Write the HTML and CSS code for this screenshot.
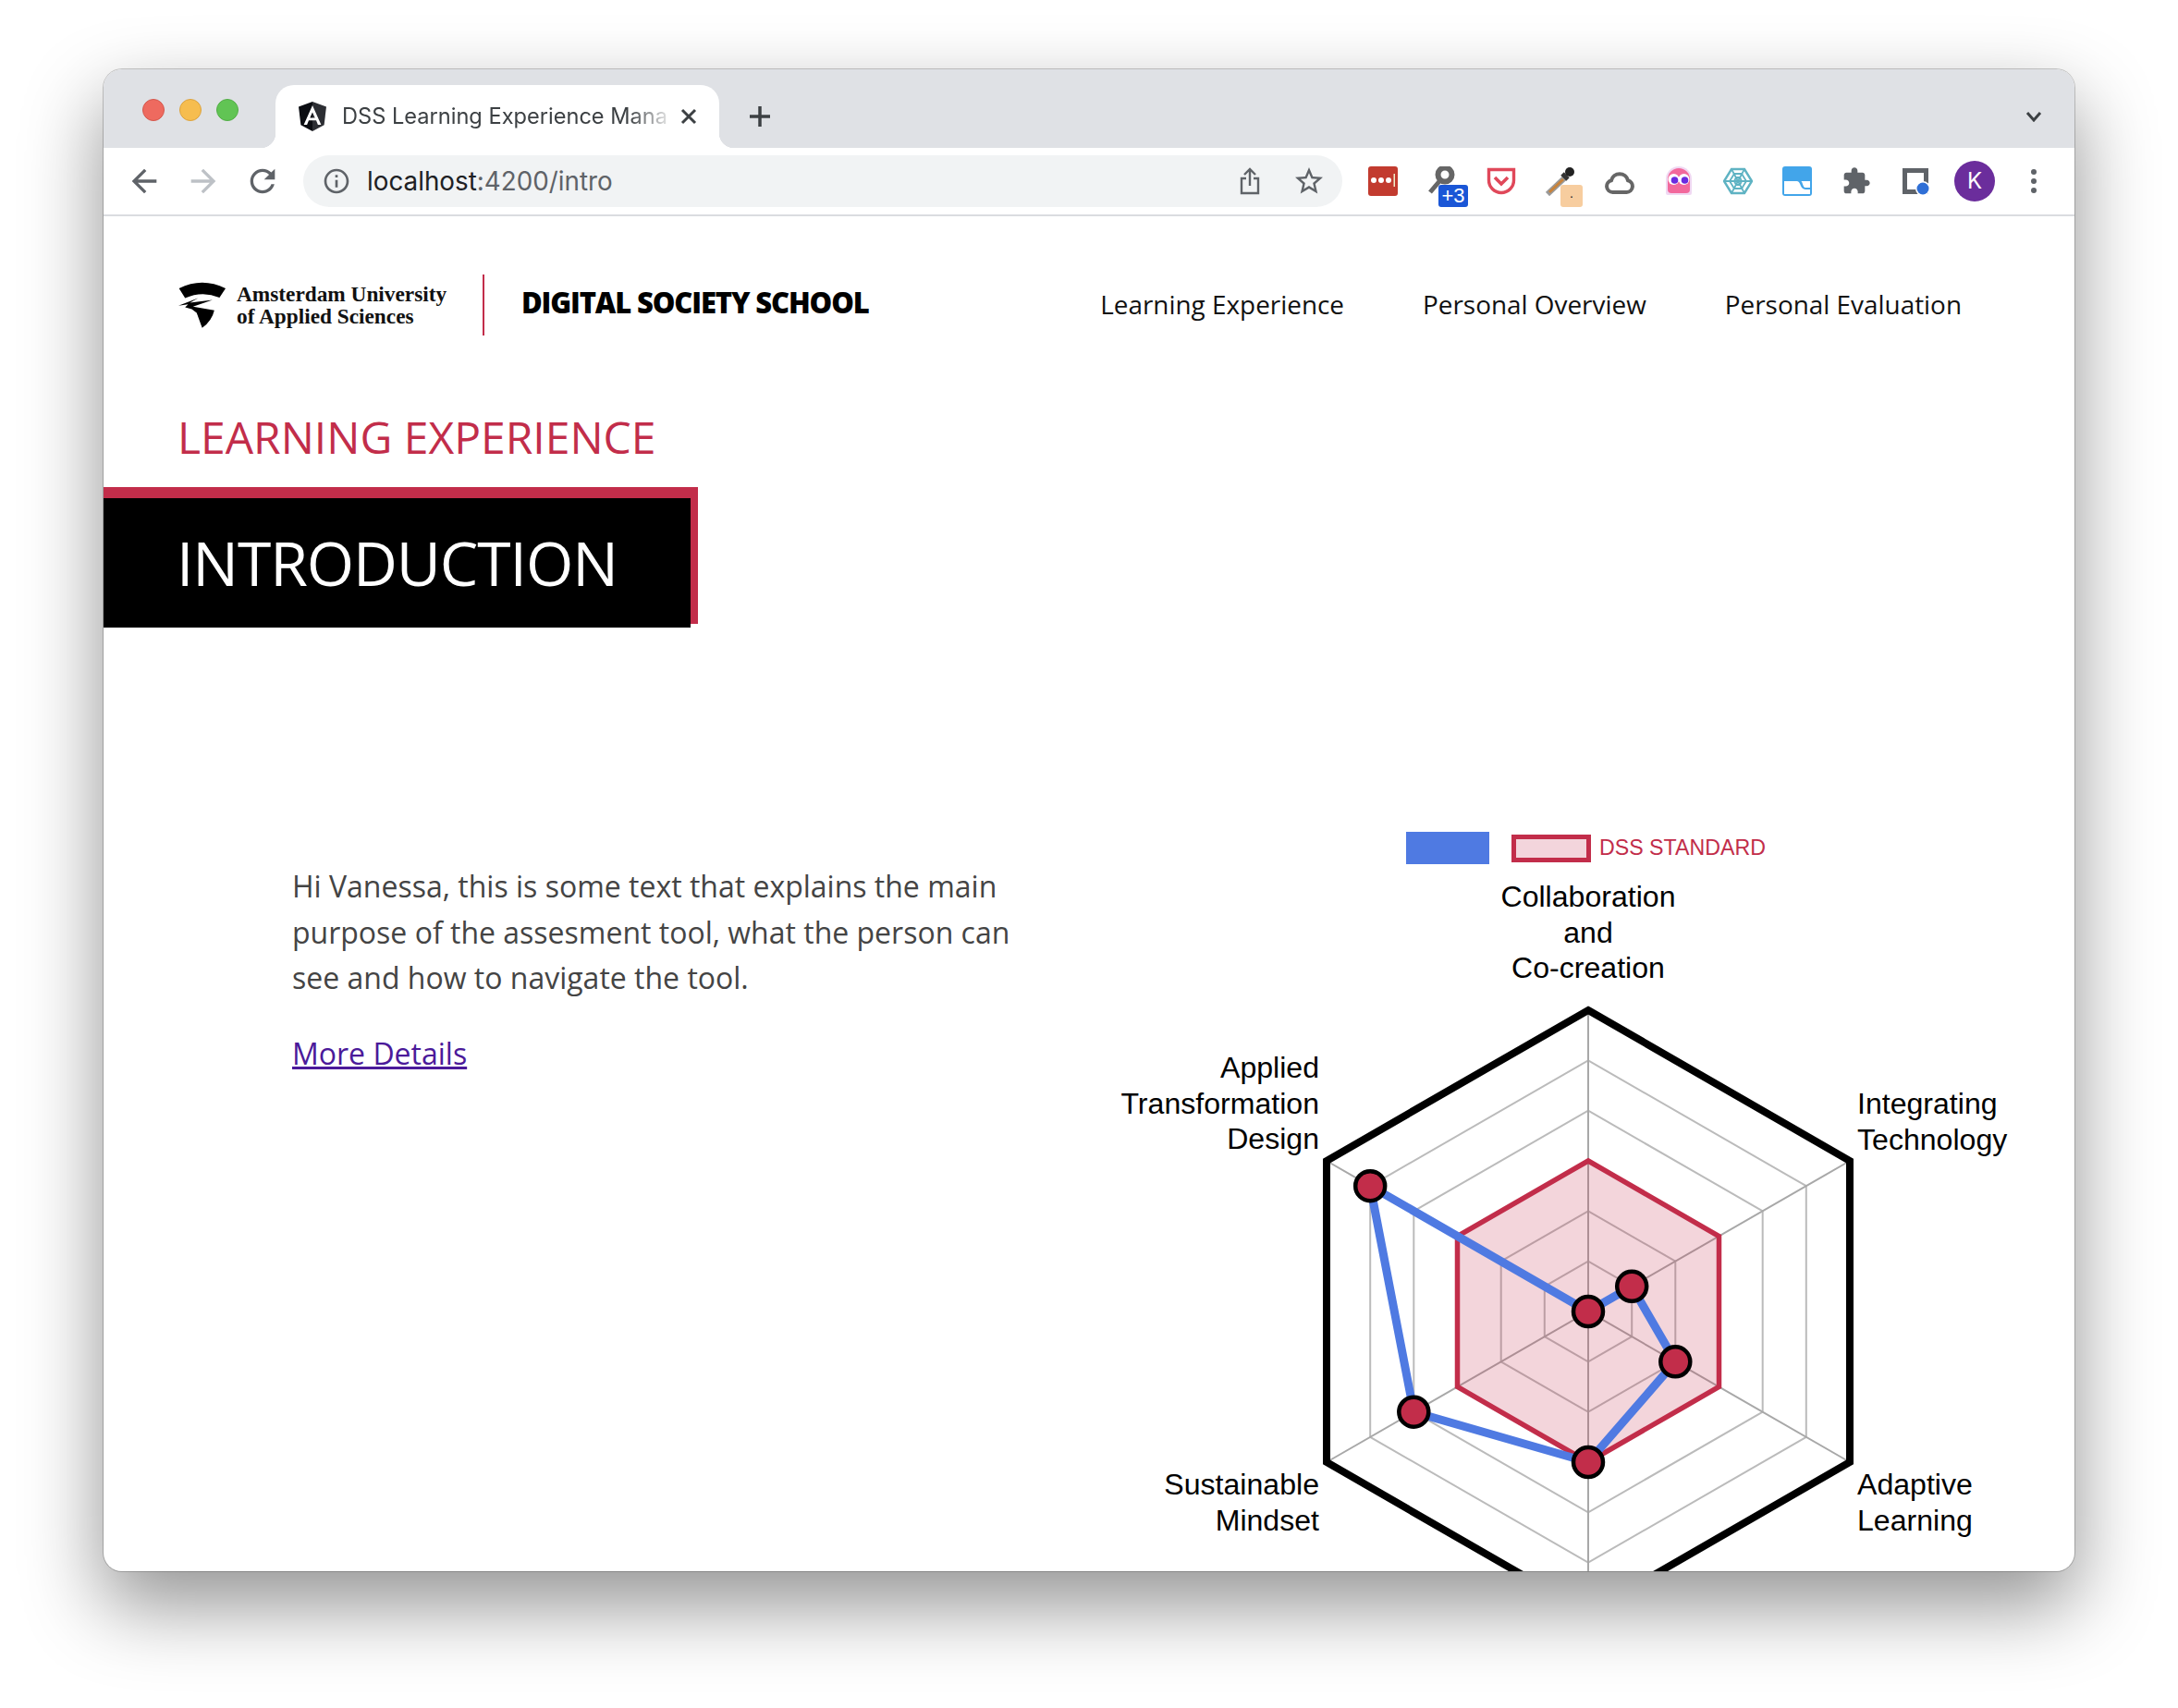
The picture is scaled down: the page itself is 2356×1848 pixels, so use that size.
FILE: index.html
```html
<!DOCTYPE html>
<html lang="en">
<head>
    <meta charset="UTF-8">
    <meta name="viewport" content="width=device-width, initial-scale=1.0">
    <title>DSS Learning Experience Management</title>
    <link rel="stylesheet" href="styles.css">
</head>
<body>

<div class="window">

    <!-- Browser tabs -->
    <div class="tabstrip">
        <div class="lights">
            <span class="light red"></span>
            <span class="light yellow"></span>
            <span class="light green"></span>
        </div>
        <div class="tab">
            <svg class="favicon" viewBox="0 0 32 32">
                <path fill="#0b0d12" d="M16 0 1 5.500l2.400 19.700L16 32z"/>
                <path fill="#2c2e33" d="M16 0l15 5.500-2.400 19.700L16 32z"/>
                <path fill="#fff" d="M16 4 6.600 25h3.500l1.900-4.700h8l1.900 4.700h3.500zm0 7.600 2.700 6h-5.400z"/>
            </svg>
            <span class="tab-title">DSS Learning Experience Mana</span>
            <svg class="tab-close" viewBox="0 0 24 24"><path d="M5 5l14 14M19 5 5 19"/></svg>
        </div>
        <svg class="new-tab" viewBox="0 0 24 24"><path d="M12 1v22M1 12h22"/></svg>
        <svg class="tab-menu" viewBox="0 0 24 24"><path d="M5 8l7 8 7-8"/></svg>
    </div>

    <!-- Browser toolbar -->
    <div class="toolbar">
        <div class="cell">
            <svg class="icon-40" viewBox="0 0 24 24"><path fill="#5f6368" d="M20 11H7.830l5.590-5.590L12 4l-8 8 8 8 1.410-1.410L7.830 13H20v-2z"/></svg>
        </div>
        <div class="cell">
            <svg class="icon-40" viewBox="0 0 24 24"><path fill="#bdc1c6" d="M4 11h12.170l-5.590-5.590L12 4l8 8-8 8-1.410-1.410L16.170 13H4v-2z"/></svg>
        </div>
        <div class="cell">
            <svg class="icon-40" viewBox="0 0 24 24"><path fill="#5f6368" d="M17.650 6.350C16.200 4.900 14.210 4 12 4c-4.420 0-7.990 3.580-7.990 8s3.570 8 7.990 8c3.730 0 6.840-2.550 7.730-6h-2.080c-.82 2.330-3.040 4-5.650 4-3.310 0-6-2.690-6-6s2.690-6 6-6c1.660 0 3.140.69 4.220 1.780L13 11h7V4l-2.350 2.350z"/></svg>
        </div>

        <div class="address">
            <svg class="icon-32" viewBox="0 0 24 24"><path fill="#5f6368" d="M11 7h2v2h-2zm0 4h2v6h-2zm1-9C6.480 2 2 6.480 2 12s4.480 10 10 10 10-4.480 10-10S17.520 2 12 2zm0 18c-4.410 0-8-3.590-8-8s3.590-8 8-8 8 3.590 8 8-3.590 8-8 8z"/></svg>
            <span class="url">localhost<span class="url-path">:4200/intro</span></span>
            <svg class="address-share" viewBox="0 0 24 32"><path d="M12 21V3M6 9l6-6 6 6M8 13H3v16h18V13h-5"/></svg>
            <svg class="address-star" viewBox="0 0 24 24"><path fill="#5f6368" d="M22 9.240l-7.190-.62L12 2 9.190 8.630 2 9.240l5.460 4.730L5.820 21 12 17.270 18.180 21l-1.630-7.030L22 9.240zM12 15.400l-3.760 2.270 1-4.280-3.320-2.880 4.380-.38L12 6.100l1.710 4.040 4.380.38-3.320 2.880 1 4.280L12 15.400z"/></svg>
        </div>

        <div class="extensions">
            <div class="cell">
                <svg class="icon-32" viewBox="0 0 32 32">
                    <rect width="32" height="32" rx="3" fill="#c23b2f"/>
                    <circle cx="6" cy="15" r="3" fill="#fff"/><circle cx="14" cy="15" r="3" fill="#fff"/><circle cx="22" cy="15" r="3" fill="#fff"/>
                    <rect x="27.500" y="8" width="1.500" height="14" fill="#eec"/>
                </svg>
            </div>
            <div class="cell">
                <svg class="icon-32" viewBox="0 0 32 32"><circle cx="19" cy="9" r="7.500" fill="none" stroke="#666" stroke-width="6"/><path d="M14 15 3 28" stroke="#666" stroke-width="5"/></svg>
                <span class="badge badge-blue">+3</span>
            </div>
            <div class="cell">
                <svg class="icon-32" viewBox="0 0 32 32"><path fill="none" stroke="#e0485a" stroke-width="3.400" d="M2.500 3.500h27V15a13.500 13.500 0 0 1-27 0z"/><path fill="none" stroke="#e0485a" stroke-width="3.600" d="M9 12l7 7 7-7"/></svg>
            </div>
            <div class="cell">
                <svg class="icon-32" viewBox="0 0 32 32">
                    <path d="M20 13 2 30" stroke="#9a9a9a" stroke-width="6"/>
                    <path d="M19 14 4 28" stroke="#c9833a" stroke-width="3"/>
                    <path d="M18 8l6 6" stroke="#333" stroke-width="5"/>
                    <circle cx="26" cy="6" r="5" fill="#222"/>
                </svg>
                <span class="badge badge-peach">.</span>
            </div>
            <div class="cell">
                <svg class="icon-32" viewBox="0 0 32 32"><path fill="none" stroke="#666" stroke-width="4" d="M8.500 28a6.500 6.500 0 0 1-1.500-12.800 9.300 9.300 0 0 1 18 0A6.500 6.500 0 0 1 23.500 28z"/></svg>
            </div>
            <div class="cell">
                <svg class="icon-32" viewBox="0 0 32 32">
                    <path fill="#f0d8f2" d="M2 14a14 14 0 0 1 28 0v15a2 2 0 0 1-2 2H4a2 2 0 0 1-2-2z"/>
                    <path fill="#f2689c" d="M4 14a12 12 0 0 1 24 0v11a4 4 0 0 1-4 4H8a4 4 0 0 1-4-4z"/>
                    <circle cx="10.500" cy="14" r="6" fill="#fff"/><circle cx="21.500" cy="14" r="6" fill="#fff"/>
                    <circle cx="11.500" cy="15" r="3.800" fill="#6a2be0"/><circle cx="22.500" cy="15" r="3.800" fill="#6a2be0"/>
                </svg>
            </div>
            <div class="cell">
                <svg class="icon-32" viewBox="0 0 32 32" fill="none" stroke="#5fb3c3" stroke-width="1.800">
                    <path stroke-width="2.400" d="M9 3h14l8 13-8 13H9L1 16z"/>
                    <path d="M12 8h8l5 8-5 8h-8l-5-8z"/>
                    <path d="M14 12h4l2 4-2 4h-4l-2-4z"/>
                    <path d="M9 3l14 26M23 3 9 29M1 16h30"/>
                </svg>
            </div>
            <div class="cell">
                <svg class="icon-32" viewBox="0 0 32 32">
                    <rect width="32" height="32" rx="3" fill="#42a5ea"/>
                    <path fill="#fff" d="M2 16h14c4 0 3 9 9 9h5v5H2z"/>
                    <path fill="#fff" d="M20 16h10v7h-5c-3 0-3-7-5-7z"/>
                </svg>
            </div>
            <div class="cell">
                <svg class="icon-32" viewBox="0 0 24 24"><path fill="#5f6368" d="M20.500 11H19V7c0-1.100-.9-2-2-2h-4V3.500C13 2.120 11.880 1 10.500 1S8 2.120 8 3.500V5H4c-1.100 0-1.990.9-1.990 2v3.800H3.500c1.490 0 2.700 1.210 2.700 2.700s-1.210 2.700-2.700 2.700H2V20c0 1.100.9 2 2 2h3.800v-1.500c0-1.490 1.210-2.700 2.700-2.700 1.490 0 2.700 1.210 2.700 2.700V22H17c1.100 0 2-.9 2-2v-4h1.500c1.380 0 2.500-1.120 2.500-2.500S21.880 11 20.500 11z"/></svg>
            </div>
            <div class="cell">
                <svg class="icon-32" viewBox="0 0 32 32">
                    <path fill="none" stroke="#5f6368" stroke-width="5" d="M4.500 4.500h23v23h-23z"/>
                    <circle cx="24" cy="24" r="8" fill="#fff"/>
                    <circle cx="24" cy="24" r="6.500" fill="#2f6fd6"/>
                </svg>
            </div>
            <div class="cell"><span class="avatar">K</span></div>
            <div class="cell">
                <svg class="icon-32" viewBox="0 0 32 32"><circle cx="16" cy="6" r="3" fill="#5f6368"/><circle cx="16" cy="16" r="3" fill="#5f6368"/><circle cx="16" cy="26" r="3" fill="#5f6368"/></svg>
            </div>
        </div>
    </div>

    <!-- Page -->
    <div class="page">
        <header class="site-header">
            <div class="brand">
                <svg class="brand-mark" viewBox="40 65 158 155">
                    <path d="M42 88Q118 50 195 88L175 118Q118 95 62 120z"/>
                    <path d="M40 145 105 120 78 135 152 126 88 148 158 160Q150 195 118 218L100 168 84 156 62 150 72 140z"/>
                </svg>
                <div class="brand-uni">Amsterdam University<br>of Applied Sciences</div>
                <div class="brand-school">DIGITAL SOCIETY SCHOOL</div>
            </div>
            <nav class="site-nav">
                <a href="#">Learning Experience</a>
                <a href="#">Personal Overview</a>
                <a href="#">Personal Evaluation</a>
            </nav>
        </header>

        <h2 class="section-title">LEARNING EXPERIENCE</h2>
        <div class="banner">
            <h1>INTRODUCTION</h1>
        </div>

        <div class="content">
            <div class="intro">
                <p>Hi Vanessa, this is some text that explains the main purpose of the assesment tool, what the person can see and how to navigate the tool.</p>
                <a href="#">More Details</a>
            </div>

            <svg class="radar" viewBox="-518 -538 1000 820">
                <!-- legend -->
                <rect x="-197" y="-519" width="90" height="35" fill="#4f7ae2"/>
                <rect x="-80.500" y="-513.500" width="81" height="25" fill="#f3d5dc" stroke="#c22d4a" stroke-width="5"/>
                <text class="legend-label" x="12" y="-494">DSS STANDARD</text>

                <!-- axis labels -->
                <text class="axis-label middle" y="-438"><tspan x="0">Collaboration</tspan><tspan x="0" dy="38.500">and</tspan><tspan x="0" dy="38.500">Co-creation</tspan></text>
                <text class="axis-label" y="-214"><tspan x="291">Integrating</tspan><tspan x="291" dy="38.500">Technology</tspan></text>
                <text class="axis-label" y="198"><tspan x="291">Adaptive</tspan><tspan x="291" dy="38.500">Learning</tspan></text>
                <text class="axis-label end" y="198"><tspan x="-291">Sustainable</tspan><tspan x="-291" dy="38.500">Mindset</tspan></text>
                <text class="axis-label end" y="-253"><tspan x="-291">Applied</tspan><tspan x="-291" dy="38.500">Transformation</tspan><tspan x="-291" dy="38.500">Design</tspan></text>

                <!-- grid -->
                <g class="grid">
                    <polygon points="0,-54.300 47.200,-27.200 47.200,27.200 0,54.300 -47.200,27.200 -47.200,-27.200"/>
                    <polygon points="0,-108.700 94.300,-54.300 94.300,54.300 0,108.700 -94.300,54.300 -94.300,-54.300"/>
                    <polygon points="0,-163 141.500,-81.500 141.500,81.500 0,163 -141.500,81.500 -141.500,-81.500"/>
                    <polygon points="0,-217.300 188.700,-108.700 188.700,108.700 0,217.300 -188.700,108.700 -188.700,-108.700"/>
                    <polygon points="0,-271.700 235.800,-135.800 235.800,135.800 0,271.700 -235.800,135.800 -235.800,-135.800"/>
                    <path class="axes" d="M0-326V326M283-163-283 163M283 163-283-163"/>
                </g>
                <polygon class="outer" points="0,-326 283,-163 283,163 0,326 -283,163 -283,-163"/>

                <!-- series -->
                <polygon class="standard" points="0,-163 141.500,-81.500 141.500,81.500 0,163 -141.500,81.500 -141.500,-81.500"/>
                <polygon class="score" points="0,0 47.200,-27.200 94.300,54.300 0,163 -188.700,108.700 -235.800,-135.800"/>
                <g class="points">
                    <circle r="16"/>
                    <circle cx="47.200" cy="-27.200" r="16"/>
                    <circle cx="94.300" cy="54.300" r="16"/>
                    <circle cy="163" r="16"/>
                    <circle cx="-188.700" cy="108.700" r="16"/>
                    <circle cx="-235.800" cy="-135.800" r="16"/>
                </g>
            </svg>
        </div>
    </div>
</div>

</body>
</html>
```

FILE: styles.css
```css
* {
    box-sizing: border-box;
}

html, body {
    margin: 0;
    padding: 0;
    height: 100%;
    overflow: hidden;
}

body {
    background-color: #fff;
    font-family: "Open Sans", sans-serif;
    padding: 75px 112px 148px;
}

.window {
    height: 1625px;
    border-radius: 20px;
    background-color: #fff;
    overflow: hidden;
    box-shadow: 0 0 0 1px rgba(0, 0, 0, 0.2), 0 36px 84px 2px rgba(0, 0, 0, 0.42);
}

/* tabs */
.tabstrip {
    display: flex;
    align-items: flex-end;
    height: 85px;
    background-color: #dfe1e5;
    padding-left: 42px;
}

.lights {
    display: flex;
    gap: 16px;
    align-self: flex-start;
    margin-top: 32px;
    margin-right: 40px;
}

.light {
    width: 24px;
    height: 24px;
    border-radius: 50%;
}

.red { background-color: #ee6a5f; border: 1px solid #d4574c; }
.yellow { background-color: #f6bd4f; border: 1px solid #dca33f; }
.green { background-color: #61c454; border: 1px solid #52ad46; }

.tab {
    position: relative;
    display: flex;
    align-items: center;
    width: 480px;
    height: 68px;
    padding: 0 21px 0 24px;
    background-color: #fff;
    border-radius: 20px 20px 0 0;
}

.tab::before, .tab::after {
    content: "";
    position: absolute;
    bottom: 0;
    width: 16px;
    height: 16px;
}

.tab::before {
    left: -16px;
    background: radial-gradient(circle at 0 0, transparent 16px, #fff 16.500px);
}

.tab::after {
    right: -16px;
    background: radial-gradient(circle at 100% 0, transparent 16px, #fff 16.500px);
}

.favicon {
    width: 32px;
    height: 32px;
    flex-shrink: 0;
    margin-right: 16px;
}

.tab-title {
    margin-top: -2px;
    white-space: nowrap;
    font-family: Inter, sans-serif;
    font-size: 23.600px;
    color: #3c4043;
    -webkit-mask-image: linear-gradient(to right, #000 88%, rgba(0, 0, 0, 0.15));
    mask-image: linear-gradient(to right, #000 88%, rgba(0, 0, 0, 0.15));
}

.tab-close {
    width: 24px;
    height: 24px;
    margin-left: auto;
    fill: none;
    stroke: #3c4043;
    stroke-width: 3;
}

.new-tab {
    width: 24px;
    height: 24px;
    margin: 0 0 22px 32px;
    fill: none;
    stroke: #3c4043;
    stroke-width: 3.500;
}

.tab-menu {
    width: 24px;
    height: 24px;
    margin: 0 32px 22px auto;
    fill: none;
    stroke: #3c4043;
    stroke-width: 3;
}

/* toolbar */
.toolbar {
    display: flex;
    align-items: center;
    height: 74px;
    padding: 0 12px 1px;
    background-color: #fff;
    border-bottom: 2px solid #dadce0;
}

.cell {
    position: relative;
    display: flex;
    align-items: center;
    justify-content: center;
    width: 64px;
    height: 64px;
    flex-shrink: 0;
}

.icon-40 { width: 40px; height: 40px; }
.icon-32 { width: 32px; height: 32px; }

.address {
    display: flex;
    align-items: center;
    flex: 1;
    height: 56px;
    margin: 0 12px;
    padding: 0 18px 0 20px;
    border-radius: 28px;
    background-color: #f1f3f4;
}

.url {
    margin-left: 17px;
    font-family: Inter, sans-serif;
    font-size: 27.800px;
    color: #202124;
}

.url-path {
    color: #5f6368;
}

.address-share {
    width: 24px;
    height: 32px;
    margin-left: auto;
    fill: none;
    stroke: #5f6368;
    stroke-width: 2.400;
}

.address-star {
    width: 36px;
    height: 36px;
    margin-left: 34px;
}

.extensions {
    display: flex;
}

.badge {
    position: absolute;
    right: 4px;
    bottom: 4px;
    width: 32px;
    height: 24px;
    border-radius: 3px;
    font-family: "Liberation Sans", sans-serif;
    font-size: 22px;
    line-height: 24px;
    text-align: center;
}

.badge-blue {
    background-color: #1a56d6;
    color: #fff;
}

.badge-peach {
    right: 8px;
    width: 24px;
    background-color: #f7cd9f;
    color: #222;
    font-size: 14px;
    line-height: 18px;
}

.avatar {
    width: 44px;
    height: 44px;
    border-radius: 50%;
    background-color: #6b2d9c;
    color: #fff;
    font-family: Inter, sans-serif;
    font-size: 24px;
    line-height: 44px;
    text-align: center;
}

/* page header */
.site-header {
    display: flex;
    align-items: center;
    justify-content: space-between;
    padding: 63px 122px 0 81px;
}

.brand {
    display: flex;
    align-items: center;
    height: 66px;
}

.brand-mark {
    width: 52px;
    height: 52px;
    margin-right: 11px;
}

.brand-uni {
    width: 268px;
    height: 66px;
    padding-top: 9px;
    border-right: 2px solid #c22d4a;
    font-family: "Liberation Serif", serif;
    font-weight: bold;
    font-size: 23.300px;
    line-height: 24px;
    color: #111;
}

.brand-school {
    margin: -7px 0 0 40px;
    font-weight: 800;
    font-size: 31px;
    letter-spacing: -1.150px;
    color: #000;
}

.site-nav {
    display: flex;
    gap: 85px;
    margin-top: -2px;
}

.site-nav a {
    font-size: 27.900px;
    color: #111;
    text-decoration: none;
}

/* headings */
.section-title {
    margin: 80px 0 0 80px;
    font-size: 48px;
    font-weight: 400;
    line-height: 60px;
    color: #c22d4a;
}

.banner {
    width: 643px;
    height: 148px;
    margin-top: 24px;
    background-color: #c22d4a;
    padding-top: 12px;
}

.banner h1 {
    width: 635px;
    height: 140px;
    margin: 0;
    padding-left: 79px;
    background-color: #000;
    color: #fff;
    font-size: 66px;
    font-weight: 400;
    letter-spacing: -1.100px;
    line-height: 138px;
}

/* content */
.content {
    display: flex;
    justify-content: space-between;
    align-items: flex-start;
    padding: 0 44px 0 204px;
}

.intro {
    width: 800px;
    margin-top: 259px;
    font-size: 32px;
    line-height: 49.500px;
    color: #444;
}

.intro p {
    margin: 0 0 32px;
}

.intro a {
    color: #4b1a9a;
}

/* radar chart */
.radar {
    width: 1000px;
    height: 820px;
    margin-top: 206px;
    flex-shrink: 0;
}

.legend-label {
    font-family: "Liberation Sans", sans-serif;
    font-size: 23.200px;
    fill: #c22d4a;
}

.axis-label {
    font-family: "Liberation Sans", sans-serif;
    font-size: 32.100px;
    fill: #000;
}

.middle { text-anchor: middle; }
.end { text-anchor: end; }

.grid polygon {
    fill: none;
    stroke: #bbb;
    stroke-width: 2;
}

.axes {
    fill: none;
    stroke: #a8a8a8;
    stroke-width: 2;
}

.outer {
    fill: none;
    stroke: #000;
    stroke-width: 8;
}

.standard {
    fill: rgba(194, 45, 74, 0.2);
    stroke: #c22d4a;
    stroke-width: 5.500;
}

.score {
    fill: none;
    stroke: #4f7ae2;
    stroke-width: 9;
}

.points circle {
    fill: #c22d4a;
    stroke: #000;
    stroke-width: 4.500;
}
```
